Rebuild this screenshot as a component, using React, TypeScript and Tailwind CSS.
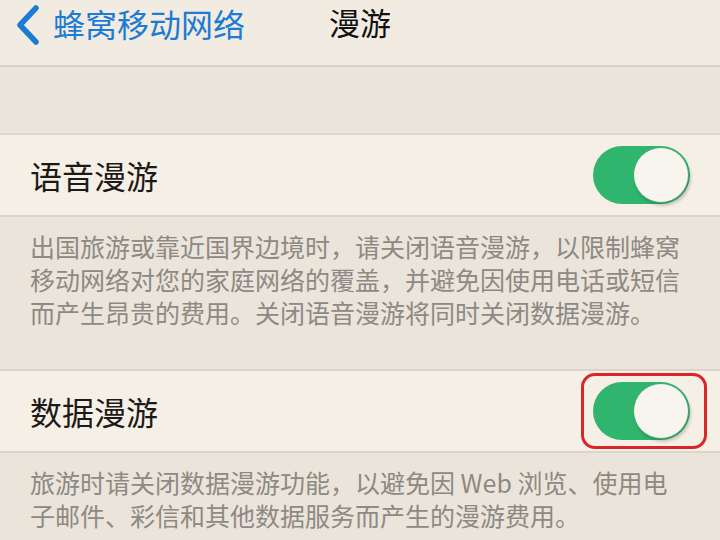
import React from "react";

const font = { fontFamily: '"Noto Sans CJK SC", "Noto Sans", sans-serif' };

function Toggle() {
	return (
		<div className="flex h-[58px] w-[97px] items-center justify-end rounded-full bg-[#2fb56d] p-px">
			<div className="h-[56px] w-[56px] rounded-full border border-[#3aa86c] bg-[#f8f5ef] shadow-[2px_3px_3px_rgba(0,0,0,0.18)]" />
		</div>
	);
}

function Row({ label, marked }: { label: string; marked?: boolean }) {
	return (
		<div className="flex h-[84px] items-center justify-between border-y-2 border-[#ddd5cc] bg-[#f6efe6] pl-[30px] pr-[30px]">
			<span className="text-[32px] text-[#1c1a18]">{label}</span>
			{marked ? (
				<div className="-mr-[17px] rounded-[14px] border-[3px] border-[#d8262a] py-[6px] pl-[9px] pr-[14px]">
					<Toggle />
				</div>
			) : (
				<Toggle />
			)}
		</div>
	);
}

function Note({ lines, className }: { lines: string[]; className?: string }) {
	return (
		<div className={"px-[30px] text-[25px] leading-[33px] text-[#8d8983] " + (className ?? "")}>
			{lines.map((l) => (
				<div key={l} className="whitespace-nowrap">
					{l}
				</div>
			))}
		</div>
	);
}

export default function App() {
	return (
		<div className="h-[540px] w-[720px] overflow-hidden bg-[#ebe4db]" style={font}>
			{/* navigation bar */}
			<div className="relative flex h-[67px] items-center border-b-2 border-[#d8d0c7] bg-[#f2ebe1]">
				<div className="flex items-center pl-[14px] pb-[20px]">
					<svg width="28" height="40" viewBox="0 0 28 40" className="mt-[4px]">
						<polyline points="22,3 6,20 22,37" fill="none" stroke="#1c7bd2" strokeWidth="5.5" strokeLinecap="round" strokeLinejoin="round" />
					</svg>
					<span className="ml-[11px] text-[32px] leading-none text-[#1c7bd2]">蜂窝移动网络</span>
				</div>
				<span className="absolute left-[329px] top-[-1px] text-[31px] text-[#111]">漫游</span>
			</div>

			<div className="h-[66px]" />

			<Row label="语音漫游" />
			<Note
				className="h-[152px] pt-[13px]"
				lines={[
					"出国旅游或靠近国界边境时，请关闭语音漫游，以限制蜂窝",
					"移动网络对您的家庭网络的覆盖，并避免因使用电话或短信",
					"而产生昂贵的费用。关闭语音漫游将同时关闭数据漫游。",
				]}
			/>

			<Row label="数据漫游" marked />
			<Note
				className="pt-[13px]"
				lines={["旅游时请关闭数据漫游功能，以避免因 Web 浏览、使用电", "子邮件、彩信和其他数据服务而产生的漫游费用。"]}
			/>
		</div>
	);
}
